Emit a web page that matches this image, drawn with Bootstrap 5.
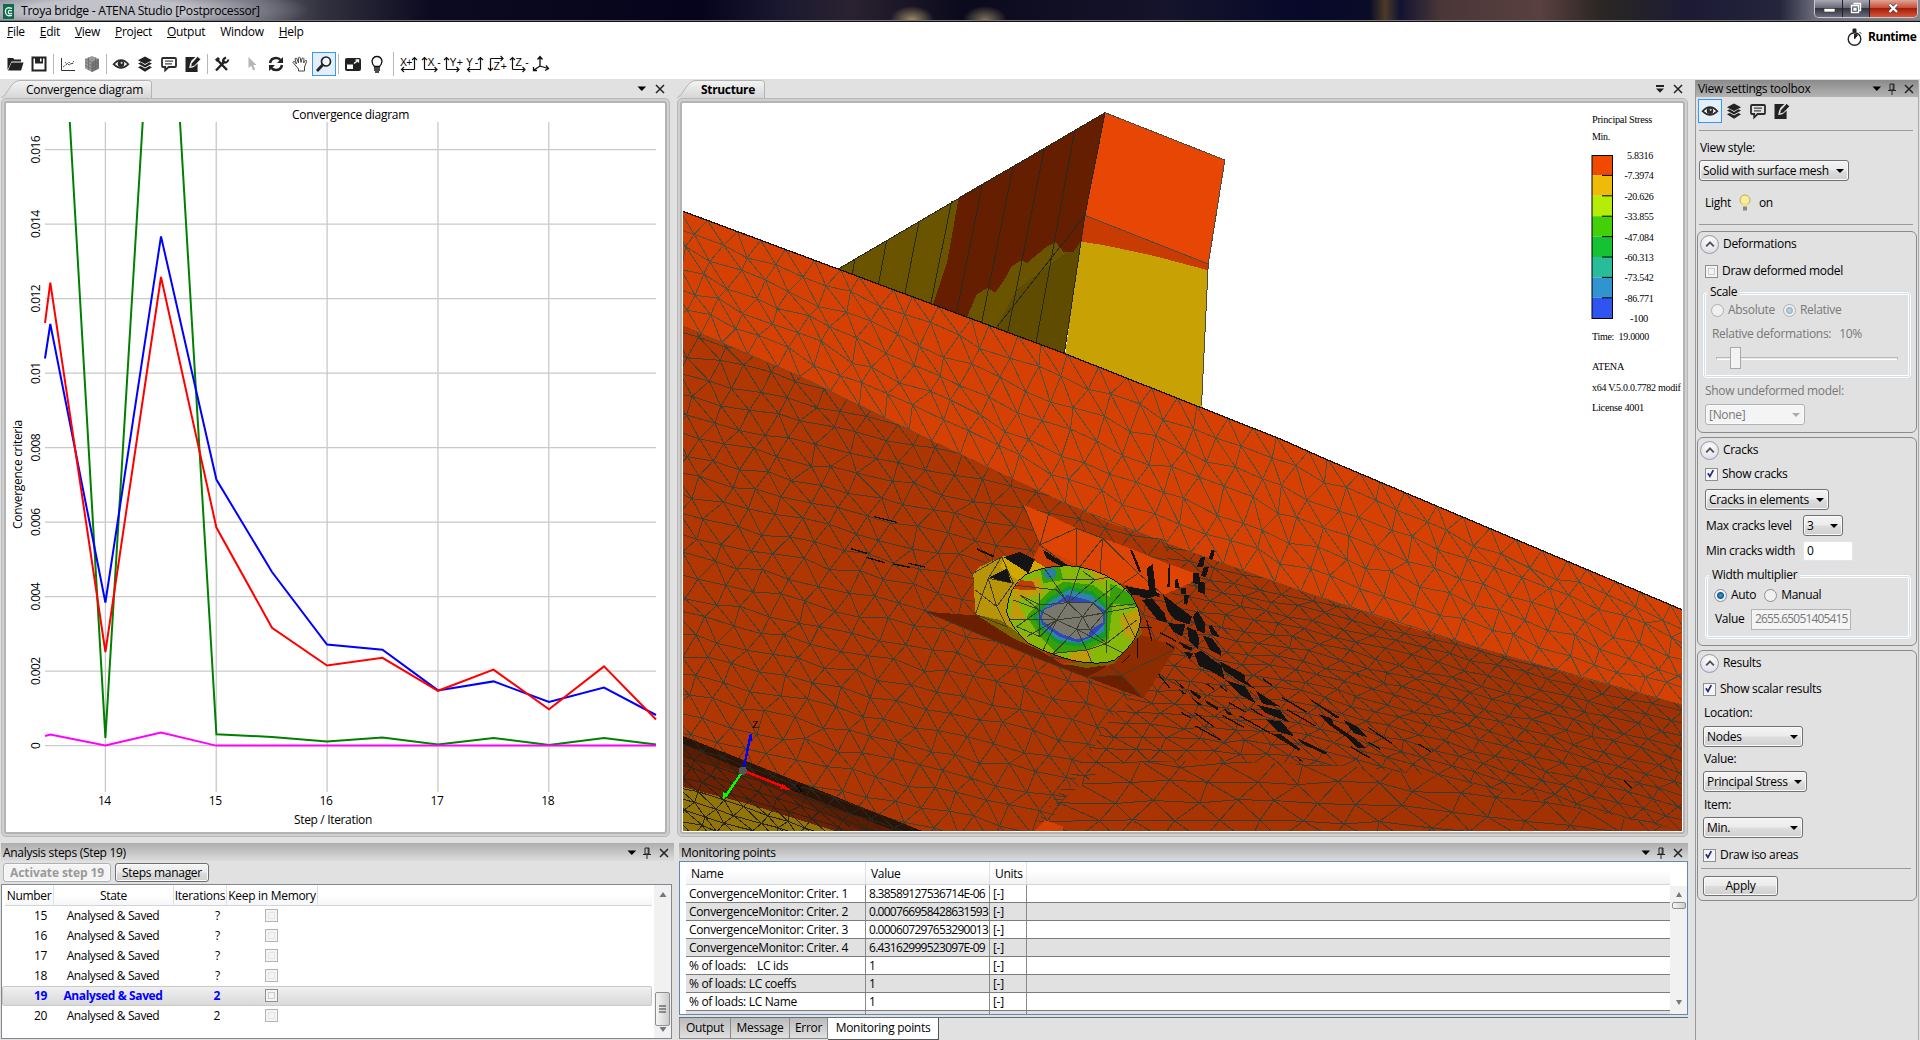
<!DOCTYPE html>
<html lang="en">
<head>
<meta charset="utf-8">
<title>Troya bridge - ATENA Studio [Postprocessor]</title>
<link href="https://cdn.jsdelivr.net/npm/bootstrap@5.3.0/dist/css/bootstrap.min.css" rel="stylesheet">
<style>
html{height:1040px;overflow:hidden}
body{width:1920px;height:1040px;overflow:hidden;background:#e1e1e1;color:#000;font:12px/16px "Open Sans","Noto Sans",sans-serif;letter-spacing:-.3px}
svg{display:block;flex:none}
svg text{white-space:pre}
.titlebar{height:22px;border-bottom:1px solid #111;box-shadow:inset 0 -1px #777;padding-left:3px;
background:radial-gradient(ellipse 200px 26px at 110px 10px,rgba(205,205,212,.85) 40%,rgba(140,140,155,.6) 75%,transparent),radial-gradient(ellipse 22px 14px at 912px 20px,rgba(200,180,120,.75),transparent),radial-gradient(ellipse 22px 14px at 985px 20px,rgba(190,170,120,.65),transparent),linear-gradient(90deg,#8b8b94 0,#6d6d78 240px,#33323f 320px,#0b0a20 430px,#05041c 700px,#1a1830 780px,#2a2230 850px,#0b0a1c 960px,#15142c 1170px,#07082a 1300px,#0b0c28 1370px,#4d3a28 1385px,#121332 1400px,#4a3638 1440px,#5a4040 1540px,#2b2723 1600px,#1c1a35 1690px,#25253c 1780px,#6c6c7c 1815px,#85858f 1920px)}
.titlebar .caption{font-size:12.2px;margin:3px 0 0 7px}
.winbtns{height:18px;width:104px;margin-right:2px;border:1px solid #c8c8d0;border-top:0;border-radius:0 0 5px 5px;overflow:hidden}
.winbtns>span{background:linear-gradient(#a9a9b4,#6a6a78 45%,#33333f 50%,#6b6b7b);border-right:1px solid #20202a}
.winbtns .w1{width:28px}.winbtns .w2{width:27px}.winbtns .w3{width:47px;background:linear-gradient(#e3a396,#c5513c 45%,#a61c08 50%,#d4573a);border:0}
.topband{height:57px;background:#fff}
.menurow{height:22px;padding:2px 0 0 7px;font-size:12px}
.menurow span{margin-right:15px}
.toolrow{height:26px;padding-left:3px;margin-top:7px}
.cell{width:24px;height:24px;display:flex;align-items:center;justify-content:center;flex:none}
.cell.on{border:1px solid #3399ff;background:#e5effb}
.cell.ax{width:22px}
.cell.arrow{margin-left:6px}
.vsep{width:5px;height:20px;background:linear-gradient(#b8b8b8,#b8b8b8) center/1px 100% no-repeat;flex:none}
.vsep.wide{width:9px;height:24px}
.runtime{width:74px;height:26px;margin-top:2px;font-weight:700;letter-spacing:-.45px}
.colL{width:674px;padding-left:1px}.colC{width:1014px;padding-left:3px}.colR{width:224px;margin-left:7px;border-left:1px solid #999;border-right:1px solid #aaa;margin-top:1px}
.tabstrip{height:19px;padding-right:9px}
.colC .tabstrip{padding-right:5px}
.doctab{height:18px;margin-top:1px}
.docframe{height:739px;border:1px solid #b8b8b8;border-radius:5px;background:#d0d0d0;padding:2px}
.docframe>div{height:100%;background:#fff;border:2px solid #b4b4b4;border-radius:3px;overflow:hidden}
.tool{margin-top:6px}
.colC .tool{margin-left:2px}
.toolhead{height:18px;background:linear-gradient(#adadad,#dcdcdc);padding:2px 5px 0 2px}
.colR .toolhead{height:17px;background:linear-gradient(#8a8a8a,#b4b4b4);padding:1px 4px 0 2px}
.hicons{display:flex;align-items:center;gap:5px}
.hicons svg:nth-child(2){margin-right:2px}
.wbtn{background:linear-gradient(#f4f4f4,#ebebeb 48%,#ddd 52%,#cfcfcf);border:1px solid #707070;border-radius:3px;box-shadow:inset 0 0 0 1px #fafafa;display:flex;align-items:center;justify-content:center}
.wbtn.off{border-color:#adb2b5;background:#f4f4f4;color:#9a9a9a}
.wsel{height:21px;padding:0 4px 0 3px;justify-content:space-between}
.wsel::after{content:"";border:4px solid transparent;border-top:4px solid #000;border-bottom:0}
.wsel.off{color:#787878}
.wsel.off::after{border-top-color:#aaa}
.stepbtns{height:23px;padding-left:2px}
.stepbtns .b1{width:108px;height:19px;font-weight:700;letter-spacing:-.1px}.stepbtns .b2{width:94px;height:19px;margin-left:4px}
.steplist{height:155px;width:671px;background:#fff;border:1px solid #828790}
.stephead{height:21px;border-bottom:1px solid #d5d5d5;background:linear-gradient(#fff 45%,#f5f6f8);margin:0 0 0 3px;width:647px}
.stephead>div,.steprow>div{text-align:center;flex:none}
.stephead>div{border-right:1px solid #dfe0e3;line-height:21px}
.steprow{height:20px;line-height:20px;padding-left:3px;width:650px}
.steprow.cur{color:#00f;font-weight:700;background:linear-gradient(#f0f0f0,#d9d9d9);border:1px solid #c9c9c9;border-radius:2px;padding-left:2px;line-height:18px}
.k1{width:49px}.k2{width:120px}.k3{width:53px}.k4{width:91px}
.steprow .k2{letter-spacing:-.38px;padding-right:2px}
.steprow .k1,.steprow .k3{text-align:right;padding-right:7px}
.chk{width:13px;height:13px;border:1px solid #8e8f8f;background:#f4f4f4;box-shadow:inset 0 0 0 2px #f4f4f4,inset 0 0 0 3px #c9cdd2;display:inline-block;flex:none}
.chk.dim{border-color:#b4b4b4;box-shadow:inset 0 0 0 2px #f4f4f4,inset 0 0 0 3px #e6e6e6}
.chk.ticked{box-shadow:none}
.steprow .chk{vertical-align:middle;margin-top:-2px;margin-left:-2px}
.sbar{width:17px;background:#f1f1f1}
.thumb{border:1px solid #8f8f8f;border-radius:2px;background:linear-gradient(90deg,#f5f5f5,#ccc)}
.thumb.big{width:15px;height:34px;margin-top:92px}.thumb.tiny{width:14px;height:7px}
.monbox{height:154px;border:1px solid #5f8ab3;background:#fff;padding-left:6px;overflow:hidden}
.monhead{height:23px;background:linear-gradient(#fff 40%,#f1f2f5);border-bottom:1px solid #d5d5d5;line-height:24px}
.monhead>div{border-right:1px solid #dfe0e3;padding-left:5px}
.monrow{height:18px;border-bottom:1px solid #7c7c7c;line-height:17px;letter-spacing:-.33px}
.monrow>div{border-right:1px solid #8a8a8a;padding-left:3px;white-space:pre}
.monrow .m2{letter-spacing:-.72px}
.monrow:nth-child(odd){background:#e1e1e1}
.monbar{margin-top:24px}.monbar .dnarrow{margin-top:88px}
.m1{width:180px;flex:none}.m2{width:124px;flex:none}.m3{width:37px;flex:none}
.bottabs{margin-top:2px;height:23px;border-top:1px solid #6c6c6c}
.bottabs>span{border:1px solid #8a8a8a;border-top:0;border-left:0;background:linear-gradient(#bbb,#e0e0e0);height:21px;text-align:center;line-height:20px}
.bottabs>span:first-child{border-left:1px solid #8a8a8a}
.bottabs .sel{background:#fff;border-color:#555;height:22px}
.t1{width:52px}.t2{width:59px}.t3{width:38px}.t4{width:111px}
.vicons{height:33px;padding:2px 0 0 2px}
.line{height:1px;background:#9a9a9a;margin:0 5px 0 3px}
.h28{height:28px}.h30{height:30px}.h24{height:24px}.h26{height:26px}.h25{height:25px}.h20{height:20px}.h29{height:29px}
.lightrow{height:43px;padding-left:9px}
.expander{border:1px solid #8a8a8a;border-radius:6px;width:220px;margin:0 0 4px 1px}
.expander.e1{height:202px;margin-top:6px}.expander.e2{height:209px}.expander.e3{height:251px}
.rnd{width:19px;height:19px;border-radius:50%;border:1px solid #9a9aa6;background:radial-gradient(circle at 50% 30%,#fff,#d5d5e2);display:flex;align-items:center;justify-content:center;margin:0 4px 0 2px}
.gbox{border:1px solid #fff;outline:1px solid #d5dfe5;box-shadow:inset 0 0 0 1px #d5dfe5,inset 0 0 0 2px #fff;border-radius:3px;width:208px}
.gbox.g1{margin:6px 0 0 5px;height:86px}.gbox.g2{margin:12px 0 0 7px;height:64px;width:206px}
.g1 .first{margin-top:4px}.g2 .first{margin-top:6px}
.gleg{height:1px;padding-left:3px}.gleg span{display:inline-block;background:#e1e1e1;padding:0 3px;line-height:16px;transform:translateY(-9px)}
.rad{width:13px;height:13px;border-radius:50%;border:1px solid #8e8f8f;background:#f0f0f0;flex:none}
.rad.sel{background:radial-gradient(circle,#3ca6d0 0,#135a86 3px,#eef 4px)}
.rad.sel.dim{background:radial-gradient(circle,#c6dcea 0,#9bb6c6 3px,#eee 4px)}.rad.dim{border-color:#b0b0b0}
.gray{color:#787878}
.track{width:182px;height:3px;border:1px solid #b8b8b8;border-bottom-color:#fff;background:#e7eaea;margin-left:12px;display:flex;align-items:center}
.knob{width:11px;height:22px;border:1px solid #a8a8a8;background:#f3f3f3;margin-left:13px;flex:none}
.inp{background:#fff;border:1px solid #e2e6ea;padding-left:3px;display:flex;align-items:center}
.s150{width:150px}.s100{width:100px}.s124{width:124px}.s40{width:40px}.s104{width:104px}
.in50{width:50px;height:20px}.in100{width:100px;height:21px;background:#f4f4f4;border:1px solid #b0b4b8;letter-spacing:-.85px;overflow:hidden}
.p5{padding-left:5px}.p6{padding-left:6px}.p7{padding-left:7px}.p8{padding-left:8px}.p9{padding-left:9px}
.l3{margin-left:3px}.l5{margin-left:5px}.l7{margin-left:7px}
.selgap{margin-top:3px;margin-bottom:3px}
.w97{width:97px}.w36{width:36px}
.apply{width:75px;height:20px;margin:7px 0 0 5px}
</style>
<script src="https://cdn.jsdelivr.net/npm/bootstrap@5.3.0/dist/js/bootstrap.bundle.min.js"></script>
</head>
<body class="d-flex flex-column">
<svg width="0" height="0" class="position-absolute">
<defs>
<symbol id="i-eye" viewBox="0 0 18 18"><path d="M1.6 9.2Q9 1 16.4 9.2Q9 16.6 1.6 9.2Z" fill="#fff" stroke="#2b2b2b" stroke-width="1.7"/><circle cx="9" cy="8.8" r="3.3" fill="#2b2b2b"/><circle cx="9.6" cy="7.8" r="1.1" fill="#ccc"/></symbol>
<symbol id="i-layers" viewBox="0 0 18 18"><path d="M9 1.500L16 5.200L9 9L2 5.200Z" fill="#222"/><path d="M2 8.400l2.600-1.200L9 9.900l4.400-2.700L16 8.400L9 12.600Z M2 12.200l2.600-1.200L9 13.600l4.400-2.600l2.600 1.200L9 16.800Z" fill="#222"/></symbol>
<symbol id="i-note" viewBox="0 0 18 18"><path d="M3 3h12q1 0 1 1v7q0 1-1 1H8.600L5.200 15.400V12H3q-1 0-1-1V4q0-1 1-1Z" fill="none" stroke="#2b2b2b" stroke-width="1.800"/><path d="M5 6.200h8M5 8.800h7" stroke="#444" stroke-width="1.200"/></symbol>
<symbol id="i-edit" viewBox="0 0 18 18"><path d="M1.500 2h10L7.500 5.500 6 9l-.8 4 4.200-.8L13.600 8.500v8.500H1.500Z" fill="#222"/><path d="M6.600 12l.9-3.800L13.600 1.400l3.200 2.900-6.400 6.700Z" fill="#222" stroke="#fff" stroke-width=".7"/></symbol>
<symbol id="i-pin" viewBox="0 0 10 12"><path d="M3 1h4v6H3ZM1 7.500h8M5 8v4M6.200 1v6" stroke="#222" fill="none"/></symbol>
<symbol id="i-x" viewBox="0 0 10 10"><path d="M1 1l8 8M9 1l-8 8" stroke="#222" stroke-width="1.500"/></symbol>
<symbol id="i-dn" viewBox="0 0 10 8"><path d="M.5 1.500h8.600L4.800 6Z"/></symbol>
<symbol id="i-dn2" viewBox="0 0 10 8"><path d="M1 0h8v2H1ZM1 3.600h8L5 7.800Z" fill="#222"/></symbol>
<symbol id="i-up" viewBox="0 0 10 8"><path d="M1.200 6.400L5 2.400l3.800 4" fill="none" stroke="#555" stroke-width="2"/></symbol>
<symbol id="i-tick" viewBox="0 0 13 13"><path d="M3.400 6.200l2.400 3.600L9.800 2.600" fill="none" stroke="#22267c" stroke-width="2"/></symbol>
</defs></svg>

<header class="titlebar d-flex align-items-start">
<svg width="11" height="16" viewBox="0 0 11 16" class="mt-1"><rect width="11" height="15" y="0" fill="#0d6b4c"/><path d="M9 4.400Q2.400 2.200 2.400 7.600T9 11.400M9 7Q5.600 5.400 5.400 8T9 9.400" fill="none" stroke="#e8f5ee" stroke-width="1.300"/></svg>
<span class="caption">Troya bridge - ATENA Studio [Postprocessor]</span>
<div class="winbtns ms-auto d-flex"><span class="w1"><svg width="28" height="17"><rect x="9" y="8.500" width="11" height="3.500" fill="#fff" stroke="#333" stroke-width=".6"/></svg></span><span class="w2"><svg width="27" height="17"><path d="M10.500 3.500h7v7h-2M8.500 5.500h7v7h-7Z M11 8.500h2v1.500h-2z" fill="none" stroke="#fff" stroke-width="1.400"/></svg></span><span class="w3"><svg width="47" height="17"><path d="M19.500 4.500l7.500 7.500M27 4.500l-7.500 7.500" stroke="#444" stroke-width="3.600"/><path d="M19.500 4.500l7.500 7.500M27 4.500l-7.500 7.500" stroke="#fff" stroke-width="2.300"/></svg></span></div>
</header>

<div class="topband d-flex justify-content-between">
<div>
<nav class="menurow d-flex"><span><u>F</u>ile</span><span><u>E</u>dit</span><span><u>V</u>iew</span><span><u>P</u>roject</span><span><u>O</u>utput</span><span>Window</span><span><u>H</u>elp</span></nav>
<div class="toolrow d-flex align-items-center">
<span class="cell"><svg width="18" height="18"><path d="M1.500 15V3h5.500l1.500 1.500H15v2H5.500L3 12" fill="#222"/><path d="M5.500 7.500H17.500L15 15.500H2Z" fill="#222"/></svg></span>
<span class="cell"><svg width="18" height="18"><path d="M2.500 2.500h13v13h-13Z" fill="#fff" stroke="#222" stroke-width="2"/><path d="M5 2h8v6.500H5Z" fill="#222"/><path d="M10 3.500h1.500v3H10Z" fill="#fff"/></svg></span>
<span class="vsep"></span>
<span class="cell"><svg width="18" height="18"><path d="M2.500 3v12.500H16" stroke="#333" fill="none"/><path d="M4 12l4-3 3 1 4-4M6 7l2 2 2-2 2 2 3-1" stroke="#555" fill="none" stroke-dasharray="2 1"/></svg></span>
<span class="cell"><svg width="18" height="18"><path d="M9 1l7 3v9.500L9 17 2 13.500V4Z" fill="#999"/><path d="M9 7.500L16 4v9.500L9 17Z" fill="#777"/><path d="M2 4l7 3.500L16 4M9 7.500V17M2 7l7 3.500L16 7M2 10.300l7 3.500 7-3.500M5.500 2.500V15M12.500 2.500V15" stroke="#666" fill="none" stroke-width=".7"/></svg></span>
<span class="vsep"></span>
<span class="cell"><svg width="18" height="18"><use href="#i-eye"/></svg></span>
<span class="cell"><svg width="18" height="18"><use href="#i-layers"/></svg></span>
<span class="cell"><svg width="18" height="18"><use href="#i-note"/></svg></span>
<span class="cell"><svg width="18" height="18"><use href="#i-edit"/></svg></span>
<span class="vsep"></span>
<span class="cell"><svg width="18" height="18"><path d="M3 15.500L12 6M4.500 5l9.500 10" stroke="#222" stroke-width="2.400"/><path d="M2 4.500l3-2.500 2 2-3 3Z" fill="#222"/><path d="M15.500 4.500Q14 9 10 7Q9.500 4 13 2.500" fill="none" stroke="#222" stroke-width="2"/></svg></span>
<span class="cell arrow"><svg width="18" height="18"><path d="M5.500 2v11l2.700-2.300 2 4.800 2-1-2-4.500h3.300Z" fill="#b5b5b5"/></svg></span>
<span class="cell"><svg width="18" height="18"><path d="M3 8Q4 3 9 3q3 0 4.500 2M15 10q-1 5-6 5-3 0-4.500-2" fill="none" stroke="#222" stroke-width="2.600"/><path d="M16 2v6h-6ZM2 16v-6h6Z" fill="#222"/></svg></span>
<span class="cell"><svg width="18" height="18"><path d="M5 11L2 7.500Q2 6 3.500 6.500L5.500 9 4 4q.5-1.500 1.800-.5L7.500 8 7.300 2.800q1-1.300 2 0L10 7.500l1.200-4.200q1.200-1 1.800.4L12.600 8l1.800-2.500q1.400-.4 1.200 1L13.500 12v4H7.500v-2Z" fill="#fff" stroke="#444"/></svg></span>
<span class="cell on"><svg width="18" height="18"><circle cx="11" cy="6.500" r="4.500" fill="#f4f8ff" stroke="#222" stroke-width="1.700"/><path d="M7.500 10L2 16" stroke="#222" stroke-width="2.800"/></svg></span>
<span class="vsep"></span>
<span class="cell"><svg width="18" height="18"><rect x="1" y="3" width="16" height="13" rx="2" fill="#222"/><path d="M3 9.500h6v4.500H3Z" fill="#fff"/><path d="M10 8.500l4-3M11.500 5h3v2.500" stroke="#fff" fill="none" stroke-width="1.300"/></svg></span>
<span class="cell"><svg width="18" height="18"><path d="M6.500 11.500Q4 9 4 6 5 1.500 9 1.500T14 6q0 3-2.500 5.500Z" fill="#fff" stroke="#111" stroke-width="1.300"/><path d="M6 13h6M6 15h6M7 17h4" stroke="#111" stroke-width="1.400"/></svg></span>
<span class="vsep wide"></span>
<span class="d-flex" id="axes"></span>
</div>
</div>
<div class="runtime d-flex align-items-center"><svg width="18" height="19"><circle cx="8.500" cy="11" r="6.300" fill="#fff" stroke="#222" stroke-width="1.400"/><path d="M7 1h3v3H7ZM13.500 4l1.700 1.700M8.500 11V6l3 1Z" fill="#222" stroke="#222"/></svg><span class="ms-1">Runtime</span></div>
</div>

<main class="d-flex flex-fill">
<section class="colL">
<div class="tabstrip d-flex align-items-center">
<svg class="doctab" width="152" height="18"><defs><linearGradient id="tg" x2="0" y2="1"><stop stop-color="#f4f4f4"/><stop offset="1" stop-color="#d6d6d6"/></linearGradient></defs><path d="M0 18Q4 16 8 9Q13 .5 19 .5H147.500Q150.500 .5 150.500 3V18" fill="url(#tg)" stroke="#b4b4b4"/><text x="25" y="14" textLength="117" font-size="12">Convergence diagram</text></svg>
<span class="ms-auto d-flex align-items-center gap-2"><svg width="10" height="8"><use href="#i-dn"/></svg><svg width="10" height="10"><use href="#i-x"/></svg></span>
</div>
<div class="docframe me-1"><div><svg id="chart" width="659" height="729" viewBox="6 103 659 729" font-size="12"></svg></div></div>
<div class="tool">
<div class="toolhead d-flex justify-content-between"><span>Analysis steps (Step 19)</span><span class="hicons"><svg width="10" height="8"><use href="#i-dn"/></svg><svg width="10" height="12"><use href="#i-pin"/></svg><svg width="10" height="10"><use href="#i-x"/></svg></span></div>
<div class="stepbtns d-flex align-items-center"><span class="wbtn off b1">Activate step 19</span><span class="wbtn b2">Steps manager</span></div>
<div class="steplist d-flex justify-content-between"><div>
<div class="stephead d-flex"><div class="k1">Number</div><div class="k2">State</div><div class="k3">Iterations</div><div class="k4">Keep in Memory</div></div>
<div id="steps"></div></div>
<div class="sbar d-flex flex-column align-items-center justify-content-between py-1"><svg width="8" height="10"><path d="M4 3l3.500 5h-7Z" fill="#777"/></svg><span class="thumb big"><svg width="13" height="32"><path d="M3 13h7M3 16h7M3 19h7" stroke="#333"/></svg></span><svg width="8" height="8"><path d="M4 6L7.500 1h-7Z" fill="#777"/></svg></div>
</div>
</div>
</section>

<section class="colC">
<div class="tabstrip d-flex align-items-center">
<svg class="doctab" width="90" height="18"><path d="M0 18Q4 16 8 9Q13 .5 19 .5H84.500Q87.500 .5 87.500 3V18" fill="url(#tg)" stroke="#b4b4b4"/><text x="24" y="14" textLength="54" font-size="12" font-weight="700">Structure</text></svg>
<span class="ms-auto d-flex align-items-center gap-2"><svg width="10" height="8"><use href="#i-dn2"/></svg><svg width="10" height="10"><use href="#i-x"/></svg></span>
</div>
<div class="docframe"><div><svg id="model" width="1001" height="729" viewBox="682 103 1001 729">
<defs>
<clipPath id="cView"><path d="M683 103H1682V831H683Z"/></clipPath>
<clipPath id="cBand"><path d="M683 211.300L838 269L1064 353.300L1281 439.300L1323.800 458.300L1682 609.700V705L1590.700 680.300L1483.700 649.300L1404.800 625.700L1299.600 590.700L1168 544L1113 524L1060.700 501.700L1035 489.300L930 440L877.700 415L800.600 376.700L719.500 342.300L683 326Z"/></clipPath>
<clipPath id="cA1"><path d="M683 326L719.500 342.300L800.600 376.700L877.700 415L930 440L1035 489.300L1113 524L1165 540L1180 640L1110 720L1045 831H920L683 736Z"/></clipPath>
<clipPath id="cA2"><path d="M1165 543L1299.600 590.700L1404.800 625.700L1483.700 649.300L1590.700 680.300L1682 705V831L1440 777L1350 766L1200 760L1110 764L1045 812L1110 720L1180 640Z"/></clipPath>
<clipPath id="cB"><path d="M1045 812L1110 764L1200 760L1350 766L1440 777L1682 831H1030Z"/></clipPath>
<clipPath id="cLow"><path d="M683 736L922 831H683Z"/></clipPath>
<clipPath id="cEl"><path id="elp" d="M980 575Q985 500 1035 465Q1090 437 1165 437Q1240 440 1310 485Q1375 530 1382 598Q1378 665 1305 720Q1260 738 1180 722Q1100 700 1045 670Q990 620 980 575Z"/></clipPath>
<linearGradient id="gD" gradientUnits="userSpaceOnUse" x1="683" x2="1682"><stop stop-color="#b23702"/><stop offset="1" stop-color="#a03102"/></linearGradient>
</defs>
<g clip-path="url(#cView)" shape-rendering="crispEdges">
<path d="M683 300L1682 650V831H683Z" fill="url(#gD)"/>
<g id="tower" transform="translate(680 90) scale(.39541 .33333)" stroke-width="1">
<path d="M400 537L1075 68L972 790Z" fill="#6a5400"/>
<path d="M850 600L1014 455L972 790L800 713Z" fill="#5f4c00"/>
<path d="M705 322L1075 68L1013 455L995 486H970L950 456L925 472L878 519L862 511L838 530L820 570L797 608L778 594L750 614L726 681L640 643L675 520Z" fill="#661e00"/>
<path d="M1075 68L1378 210L1336 522L1024 376Z" fill="#e84604"/>
<path d="M1024 376L1336 522V541L1200 498L1070 465L1014 455Z" fill="#c83c04"/>
<path d="M1014 455L1070 465L1200 498L1336 541L1319 965L972 810Z" fill="#c8a205"/>
<g fill="none" stroke="#222a22"><path vector-effect="non-scaling-stroke" d="M400 537L1075 68L1024 376L972 790M442 508L436 553M523 450L502 582M605 392L569 610M687 334L634 642M765 282L699 668M843 228L763 697M921 176L829 727M998 122L900 760M1024 376L800 713"/><path vector-effect="non-scaling-stroke" d="M1075 68L1378 210L1336 522L1319 945M1024 376L1336 522" stroke="#4a4a40"/></g>
</g>
<path d="M683 211.300L838 269L1064 353.300L1281 439.300L1323.800 458.300L1682 609.700V705L1590.700 680.300L1483.700 649.300L1404.800 625.700L1299.600 590.700L1168 544L1113 524L1060.700 501.700L1035 489.300L930 440L877.700 415L800.600 376.700L719.500 342.300L683 326Z" fill="#d64103"/>
<g clip-path="url(#cBand)"><path id="mBand" fill="none" stroke="#50503f"/></g>
<g clip-path="url(#cA1)"><path id="mA1" fill="none" stroke="#3e4034"/></g>
<g clip-path="url(#cA2)"><path id="mA2" fill="none" stroke="#3a3c33"/></g>
<g clip-path="url(#cB)"><path id="mB" fill="none" stroke="#3a3c33"/></g>
<path d="M683 211.300L838 269L1064 353.300L1281 439.300L1323.800 458.300L1682 609.700" fill="none" stroke="#151515" stroke-width="1.300"/>
<path d="M683 736L922 831H683Z" fill="#5a1c02"/><path d="M683 757L740 772L860 831H683Z" fill="#6e2002"/><path d="M683 736L922 831H895L770 782L683 744Z" fill="#2a1408"/><path d="M683 787L745 803L835 831H683Z" fill="#927506"/>
<g clip-path="url(#cLow)"><path id="mLow" fill="none" stroke="#26261c"/></g>
<g transform="translate(680 420) scale(.33333)">
<path d="M1030 255L1105 285L1190 325L1350 385L1460 430L1560 465L1530 490L1450 525L1320 490L1200 440L1080 375Z" fill="#de4404"/>
<path d="M1080 375L1200 440L1100 450L1060 415Z" fill="#d04003"/>
<path d="M735 575L895 587L1060 680L1150 735L1290 740L1240 775L1220 772L1060 710Z" fill="#6a2000"/>
<path d="M1290 735L1370 640L1490 680L1390 835L1220 772Z" fill="#8c2c00"/><path d="M1220 772L1325 765L1390 835Z" fill="#6a2000"/>
<path d="M880 460L900 440L970 408L1040 420L1100 445L1020 480L980 560L1000 620L1100 700L1000 655L886 583Z" fill="#b89408"/>
<path d="M975 412L1060 420L1100 445L1020 485L960 440Z" fill="#d0a800"/><path d="M886 583L960 600L1100 700L1000 655Z" fill="#7a6200"/>
<path d="M1150 730L1300 720L1380 600L1386 640L1300 732L1220 744Z" fill="#7a6200"/>
<g clip-path="url(#cEl)">
<path d="M960 420H1400V760H960Z" fill="#86b80a"/>
<path d="M1000 500L1080 470L1090 520L1010 540L1040 600L990 600ZM1320 590L1390 560V690L1330 640ZM1020 640L1080 690L1050 690ZM1170 700L1230 690V730H1170ZM1220 440L1290 470L1260 490Z" fill="#c09a08"/>
<path d="M1020 480L1060 485L1070 510L1000 508Z" fill="#c03c02"/>
<path d="M1080 445L1140 440L1150 480L1090 490ZM1290 490L1370 530L1375 560L1290 550Z" fill="#36a008"/><circle cx="1110" cy="460" r="18" fill="#2a80a0"/>
<path d="M1040 590L1100 520L1150 485L1240 495L1300 540L1285 660L1220 690L1130 700L1080 650Z" fill="#36a008"/>
<path d="M1058 590L1105 535L1165 498L1240 515L1285 560L1278 650L1200 680L1130 670L1085 630Z" fill="#109a30"/>
<path d="M1070 590L1110 545L1165 510L1235 525L1275 565L1272 635L1200 670L1135 660L1088 620Z" fill="#2f84a8"/>
<path d="M1080 590L1088 568L1130 548L1160 525L1225 540L1275 570L1274 612L1235 650L1195 668L1138 650L1085 612Z" fill="#2f48c0"/>
<path d="M1086 590L1092 570L1150 545L1238 548L1270 578L1268 608L1230 630L1225 650L1190 658L1145 642L1090 605Z" fill="#7a776c"/>
<path vector-effect="non-scaling-stroke" fill="none" stroke="#3a4030" d="M1164 548L1200 440M1164 548L1090 440M1164 548L1130 510L1000 495M1164 548L1245 480L1290 470M1130 600L985 600M1130 600L1040 650M1130 600L1090 690M1190 628L1120 700M1190 628L1220 690L1240 740M1190 628L1290 680L1330 700M1208 590L1370 560M1280 670L1220 690L1120 700M1164 548L1130 600L1190 628L1208 590L1164 548L1240 548L1270 580L1208 590L1240 548L1310 495M1130 600L1085 575L1020 525L1080 555L1164 548M1130 600L1208 590L1230 630L1190 628M1270 580L1340 500L1375 550L1290 560L1230 630L1280 670L1370 600M1000 540L1080 570L1010 620L1080 650L1130 600M1145 480L1245 480L1210 455M1280 480V700M1080 520V650M1330 580L1370 660L1310 720"/>
</g>
<use href="#elp" fill="none" stroke="#111" stroke-width="3"/>
<path d="M880 460L965 410L1000 490L925 475L965 410M886 583L925 475L950 560L886 510M950 560L1000 490M950 560L980 620L886 583M735 575L1060 710L1220 772L1325 765L1390 835M1290 740L1325 765L1480 690M1030 255L1080 375L1160 435M1105 285L1080 375L1190 325V440M1190 325L1268 355L1260 460M1268 355L1200 440M1268 355L1375 460M1330 490L1375 460L1450 525" fill="none" stroke="#403c28" vector-effect="non-scaling-stroke"/>
<g fill="#141414"><path d="M972 412L1020 396L1064 418L1046 460ZM928 472L980 446L995 490ZM1088 388L1165 437L1145 440L1100 415ZM890 384L945 408L940 412L890 390ZM1350 390L1358 392L1384 455L1376 455ZM1400 445L1416 434L1428 515H1408ZM1335 498L1430 515L1440 530L1355 525Z"/></g>
<path d="M582 290L650 307M512 386L562 400M558 412L615 428M640 432L690 442M685 430L735 441M1400 600L1416 664M1380 622H1416M1372 655V715M1350 705L1325 730" fill="none" stroke="#111" stroke-width="4"/>
<path d="M1065 1232L1095 1200L1150 1220V1232Z" fill="#d64103"/>
</g>
<g transform="translate(1140 420) scale(.35077 .33333)" fill="#131313">
<path d="M20 445L36 432L46 518H26ZM82 433H86V500H78ZM100 480L106 474L114 505H100ZM152 460L168 458L172 492L152 490ZM172 414L186 410L180 442L162 442ZM204 390L214 392L206 420L196 416ZM182 440L196 442L188 472L174 468ZM166 486L186 488V524L164 514ZM116 504L132 505L130 522H118ZM126 524L140 526L134 556L124 550ZM0 510L62 522L20 536L0 530ZM5 540L34 535L70 580L78 608L50 600ZM65 524L148 590L140 614L100 600L80 575ZM80 610L130 612L120 650L95 635ZM150 590L164 572L186 610L184 640L164 632ZM134 620L160 632L168 655L166 688L140 662ZM195 620L204 616L228 652L205 645ZM178 646L205 655L230 690L232 708L200 690ZM110 664L150 684L146 692L125 684ZM124 694L152 700L142 718ZM155 700L175 692L215 725L232 735L242 778L200 752L168 738ZM228 724L300 765L298 780L330 808L285 785L240 752ZM245 780L300 800L330 850L290 828ZM330 812L400 860L350 852ZM332 854L400 872L426 908L360 880ZM358 898L404 905L440 950L395 935ZM372 940L400 942L458 988L452 992ZM448 954L535 998L528 1003L460 970ZM484 836L570 892L560 895L488 842ZM508 882L545 895L552 912L606 950L646 985L620 985L590 952L540 915ZM580 900L620 920L648 952L610 940ZM442 1006L468 1026L455 1022ZM140 806L176 830L170 838L148 822ZM145 832L180 856L168 856ZM184 838L224 864L222 872L190 850ZM236 862L264 884L250 884ZM100 780L128 804L120 806ZM110 806L132 822L122 822Z"/>
<path d="M52 762L85 804M118 878L146 894M158 880L210 920M158 918L230 960M190 792L212 808M228 796L248 815M254 848L300 876M234 886L296 922M284 888L372 940M316 866L350 888M404 832L475 876M418 868L500 918M350 776L376 796M650 922L718 970M650 966L685 988M600 980L655 1014M795 972L830 996M74 668L98 685M58 638L104 664M1380 1082L1400 1104" fill="none" stroke="#131313" stroke-width="4"/>
</g>
<g transform="translate(680 420) scale(.33333)">
<path d="M190 1050L212 945" stroke="#00f" stroke-width="7"/><path d="M204 960L214 936L216 962Z" fill="#00f"/>
<path d="M190 1052L305 1098" stroke="#f00" stroke-width="7"/><path d="M306 1090L330 1109L300 1108Z" fill="#f00"/>
<path d="M186 1056L136 1130" stroke="#0f0" stroke-width="7"/><path d="M130 1116L130 1137L146 1126Z" fill="#0f0"/><circle cx="189" cy="1052" r="12" fill="#555"/></g>
</g>
<g font-family="Liberation Serif, serif" font-size="11">
<text x="752" y="728">Z</text><text x="795" y="792">X</text>
<g id="legend"></g></g>
</svg></div></div>
<div class="tool">
<div class="toolhead d-flex justify-content-between"><span>Monitoring points</span><span class="hicons"><svg width="10" height="8"><use href="#i-dn"/></svg><svg width="10" height="12"><use href="#i-pin"/></svg><svg width="10" height="10"><use href="#i-x"/></svg></span></div>
<div class="monbox d-flex justify-content-between"><div id="mon" class="flex-fill"><div class="monhead d-flex"><div class="m1">Name</div><div class="m2">Value</div><div class="m3">Units</div></div></div>
<div class="sbar monbar d-flex flex-column align-items-center"><svg width="8" height="16"><path d="M4 6l3 5H1Z" fill="#777"/></svg><span class="thumb tiny"></span><svg width="8" height="10" class="dnarrow"><path d="M4 8L7 3H1Z" fill="#777"/></svg></div></div>
<div class="bottabs d-flex"><span class="t1">Output</span><span class="t2">Message</span><span class="t3">Error</span><span class="t4 sel">Monitoring points</span></div>
</div>
</section>

<aside class="colR">
<div class="toolhead d-flex justify-content-between"><span>View settings toolbox</span><span class="hicons"><svg width="10" height="8"><use href="#i-dn"/></svg><svg width="10" height="12"><use href="#i-pin"/></svg><svg width="10" height="10"><use href="#i-x"/></svg></span></div>
<div class="vicons d-flex"><span class="cell on"><svg width="18" height="18"><use href="#i-eye"/></svg></span><span class="cell"><svg width="18" height="18"><use href="#i-layers"/></svg></span><span class="cell"><svg width="18" height="18"><use href="#i-note"/></svg></span><span class="cell"><svg width="18" height="18"><use href="#i-edit"/></svg></span></div>
<div class="line"></div>
<div class="h29 ps-1 pt-1 d-flex align-items-center">View style:</div>
<div class="wbtn wsel s150 l3">Solid with surface mesh</div>
<div class="lightrow d-flex align-items-center">Light<svg width="12" height="18" class="mx-2"><circle cx="6" cy="6" r="5" fill="#f6ee9c" stroke="#b9ab58"/><path d="M3 9l1 4h4l1-4Z" fill="#efe28a"/><path d="M4 12.500h4v4H4Z" fill="#888"/></svg>on</div>
<div class="line"></div>
<div class="expander e1">
<div class="h24 d-flex align-items-center"><span class="rnd"><svg width="10" height="8"><use href="#i-up"/></svg></span>Deformations</div>
<div class="h30 d-flex align-items-center gap-1 p7"><span class="chk"></span>Draw deformed model</div>
<div class="gbox g1"><div class="gleg"><span>Scale</span></div>
<div class="h24 d-flex align-items-center gap-1 gray p7 first"><span class="rad dim"></span>Absolute<span class="rad sel dim ms-1"></span>Relative</div>
<div class="h24 d-flex align-items-center gray p8">Relative deformations:<span class="ms-2">10%</span></div>
<div class="h24 d-flex align-items-center"><div class="track"><span class="knob"></span></div></div></div>
<div class="h26 d-flex align-items-center gray p7">Show undeformed model:</div>
<div class="wbtn wsel off s100 l7">[None]</div>
</div>
<div class="expander e2">
<div class="h24 d-flex align-items-center"><span class="rnd"><svg width="10" height="8"><use href="#i-up"/></svg></span>Cracks</div>
<div class="h24 d-flex align-items-center gap-1 p7"><span class="chk ticked"><svg width="11" height="11" viewBox="1 1 11 11"><use href="#i-tick"/></svg></span>Show cracks</div>
<div class="wbtn wsel s124 l7 selgap">Cracks in elements</div>
<div class="h25 d-flex align-items-center p8"><span class="w97">Max cracks level</span><span class="wbtn wsel s40">3</span></div>
<div class="h25 d-flex align-items-center p8"><span class="w97">Min cracks width</span><span class="inp in50">0</span></div>
<div class="gbox g2"><div class="gleg"><span>Width multiplier</span></div>
<div class="h24 d-flex align-items-center gap-1 p8 first"><span class="rad sel"></span>Auto<span class="rad ms-1"></span>Manual</div>
<div class="h24 d-flex align-items-center p9"><span class="w36">Value</span><span class="inp in100 gray">2655.65051405415</span></div></div>
</div>
<div class="expander e3">
<div class="h24 d-flex align-items-center"><span class="rnd"><svg width="10" height="8"><use href="#i-up"/></svg></span>Results</div>
<div class="h28 d-flex align-items-center gap-1 p5"><span class="chk ticked"><svg width="11" height="11" viewBox="1 1 11 11"><use href="#i-tick"/></svg></span>Show scalar results</div>
<div class="h20 d-flex align-items-center p6">Location:</div>
<div class="wbtn wsel s100 l5 selgap mb-0">Nodes</div>
<div class="h24 d-flex align-items-center p6">Value:</div>
<div class="wbtn wsel s104 l5">Principal Stress</div>
<div class="h25 d-flex align-items-center p6">Item:</div>
<div class="wbtn wsel s100 l5">Min.</div>
<div class="h30 pt-1 d-flex align-items-center gap-1 p5"><span class="chk ticked"><svg width="11" height="11" viewBox="1 1 11 11"><use href="#i-tick"/></svg></span>Draw iso areas</div>
<div class="line"></div>
<div class="wbtn apply">Apply</div>
</div>
</aside>
</main>

<script>
{
/* toolbar axis buttons: label plus corner arrows */
const AX=[['X+','r'],['X-','l'],['Y+','l'],['Y-','r'],['Z+','d'],['Z-','l']];
document.getElementById('axes').innerHTML=AX.map(([t,k])=>{
 const p=k=='r'?'<path d="M15.500 14.500V3M13 5l2.500-2.500 2.500 2.500M15.500 14.500H3M5 12l-2.500 2.500 2.500 2.500"/>'
  :k=='l'?'<path d="M3.500 14.500V3M1 5l2.500-2.500 2.500 2.500M3.500 14.500H16M13.500 12l2.500 2.500-2.500 2.500"/>'
  :'<path d="M3.500 3.500V15M1 13l2.500 2.500 2.500-2.500M3.500 3.500H16M13.500 1l2.500 2.500-2.500 2.500"/>';
 const tx=k=='r'?1:6.5, ty=k=='d'?15:11;
 return `<span class="cell ax"><svg width="20" height="18"><g fill="none" stroke="#111" stroke-width="1.200">${p}</g><text x="${tx}" y="${ty}" font-size="10.500" textLength="${k=='r'?12:13}" font-family="Liberation Sans, sans-serif">${t}</text></svg></span>`;}).join('')
 +'<span class="cell ax"><svg width="18" height="18"><path d="M8 11V2M5.500 4.500L8 1.500l2.500 3M8 11l-6 4M5 15.500H1.500V12M8 11l8 2.500M14 10.500l2.500 3-3.500 2" fill="none" stroke="#111" stroke-width="1.300"/></svg></span>';

/* convergence chart */
let s='';
for(let i=0;i<9;i++){const y=745.6-74.5*i;s+=`<path d="M45 ${y}H656" stroke="#c9c9c9" stroke-width="1.300"/>`;
 const l=i?String(+(i*.002).toFixed(3)):'0',w=l.length==1?7:l.length==4?22:28;
 s+=`<text transform="translate(40 ${y+w/2}) rotate(-90)" textLength="${w}">${l}</text>`;}
for(let i=0;i<5;i++){const x=105.4+110.85*i;s+=`<path d="M${x} 122V792" stroke="#c9c9c9" stroke-width="1.300"/><text x="${x-7.5}" y="805" textLength="13">${14+i}</text>`;}
const L=(c,p)=>s+=`<polyline points="${p}" fill="none" stroke="${c}" stroke-width="2"/>`;
L('#008000','69.8,122 105.4,738 142.7,122');L('#008000','180,122 216.4,734.2 272,737 327,741.5 382.5,737.6 438,744.6 493.5,738 549,745 604,738 656,744.5');
L('#00f','45,358.5 50.3,324 105.4,602.5 161,236.4 216.4,479.5 272,572 327,644.6 382.5,649.8 438,690.4 493.5,681.4 549,702 604,687.5 656,715');
L('#f00','45,323 50.3,282.6 105.4,652 161,277 216.4,527.6 272,627.7 327,665.5 382.5,657.8 438,690.8 493.5,669.6 549,709.3 604,666.4 656,719.5');
L('#f0f','45,736 50.3,734.5 105.4,745.5 161,732.5 216,745.6 656,745.6');
s+='<text x="292" y="119" textLength="117">Convergence diagram</text><text x="294" y="824" textLength="78">Step / Iteration</text><text transform="translate(22 529) rotate(-90)" textLength="109">Convergence criteria</text>';
document.getElementById('chart').innerHTML=s;

/* steps table */
document.getElementById('steps').innerHTML=[[15,'?'],[16,'?'],[17,'?'],[18,'?'],[19,2],[20,2]].map(([n,i])=>`<div class="steprow d-flex${n==19?' cur':''}"><div class="k1">${n}</div><div class="k2">Analysed &amp; Saved</div><div class="k3">${i}</div><div class="k4"><span class="chk${n==19?'':' dim'}"></span></div></div>`).join('');

/* monitoring table */
document.getElementById('mon').insertAdjacentHTML('beforeend',[['ConvergenceMonitor: Criter. 1','8.38589127536714E-06'],['ConvergenceMonitor: Criter. 2','0.000766958428631593'],['ConvergenceMonitor: Criter. 3','0.000607297653290013'],['ConvergenceMonitor: Criter. 4','6.43162999523097E-09'],['% of loads:    LC ids','1'],['% of loads: LC coeffs','1'],['% of loads: LC Name','1'],['','']].map(([a,b])=>`<div class="monrow d-flex"><div class="m1">${a}</div><div class="m2">${b}</div><div class="m3">${a?'[-]':''}</div></div>`).join(''));

/* stress legend */
const C=['#f04a02','#eebb08','#b4ee08','#44d008','#14c234','#28bc98','#3094d0','#3054f0'],V=['5.8316','-7.3974','-20.626','-33.855','-47.084','-60.313','-73.542','-86.771','-100'];
let g='';C.forEach((c,i)=>g+=`<rect x="1592" y="${155+20.4*i}" width="21" height="20.4" fill="${c}"/>`+(i?`<path d="M1602 ${155+20.4*i}h11" stroke="#000"/>`:''));
V.forEach((v,i)=>{g+=`<text x="${i==8?1630:i?1624.5:1627}" y="${159+20.4*i}" textLength="${i==8?18:i?29:26}" lengthAdjust="spacingAndGlyphs">${v}</text>`;});
g+='<rect x="1592" y="155.5" width="20.5" height="163" fill="none" stroke="#000"/>';
[['Principal Stress',123,60],['Min.',140,18],['Time:  19.0000',340,57],['ATENA',370,32],['x64 V.5.0.0.7782 modif',391,88.5],['License 4001',411,52]].forEach(([t,y,w])=>g+=`<text x="1592" y="${y}" textLength="${w}" lengthAdjust="spacingAndGlyphs">${t}</text>`);
document.getElementById('legend').innerHTML=g;

/* triangulated surface meshes */
let seed=7;const rnd=()=>(seed=(seed*1103515245+12345)%2147483648)/2147483648-.5;
const interp=(pts,x)=>{for(let i=1;i<pts.length;i++)if(x<=pts[i][0]||i==pts.length-1){const[a,b]=[pts[i-1],pts[i]];return a[1]+(b[1]-a[1])*(x-a[0])/(b[0]-a[0]);}};
function mesh(id,x0,x1,dx,n,fy,skew,jx,jy,edges){
 const cols=Math.ceil((x1-x0)/dx)+2,P=[];
 for(let j=0;j<=n;j++){P.push([]);for(let i=0;i<=cols;i++){const e=edges&&(j==0||j==n);const x=x0+(i+(j%2)/2)*dx+skew*j+rnd()*dx*jx;P[j].push([x,fy(x,j)+(e?0:rnd()*jy)]);}}
 let d='';const ln=(a,b)=>{if(a&&b)d+=`M${a[0].toFixed(1)} ${a[1].toFixed(1)}L${b[0].toFixed(1)} ${b[1].toFixed(1)}`;};
 for(let j=0;j<=n;j++)for(let i=0;i<=cols;i++){const p=P[j][i];ln(p,P[j][i+1]);if(j<n){const o=j%2;ln(p,P[j+1][i-1+o]);ln(p,P[j+1][i+o]);}}
 document.getElementById(id).setAttribute('d',d);}
const edge=[[683,211.3],[838,269],[1064,353.3],[1281,439.3],[1682,609.7]],fold=[[683,326],[800.6,376.7],[930,440],[1060.7,501.7],[1168,544],[1299.6,590.7],[1483.7,649.3],[1682,705]];
mesh('mBand',655,1710,26,6,(x,j)=>interp(edge,x)+(interp(fold,x)-interp(edge,x))*j/6,3,.35,9,true);
mesh('mA1',560,1200,27,34,(x,j)=>255+.22*(x-683)+j*20,2,.35,7);
mesh('mA2',960,1700,26,30,(x,j)=>interp([[1000,480],[1300,555],[1682,640]],x)+j*interp([[1000,14],[1300,10.5],[1682,12]],x),3,.35,4);
mesh('mB',950,1720,42,8,(x,j)=>745+(x>1350?.1*(x-1350):0)+j*19,4,.4,7);
mesh('mLow',600,940,22,14,(x,j)=>700+.4*(x-683)+j*11-(x-683)*.01*j,4,.4,3);
}
</script>
</body>
</html>
